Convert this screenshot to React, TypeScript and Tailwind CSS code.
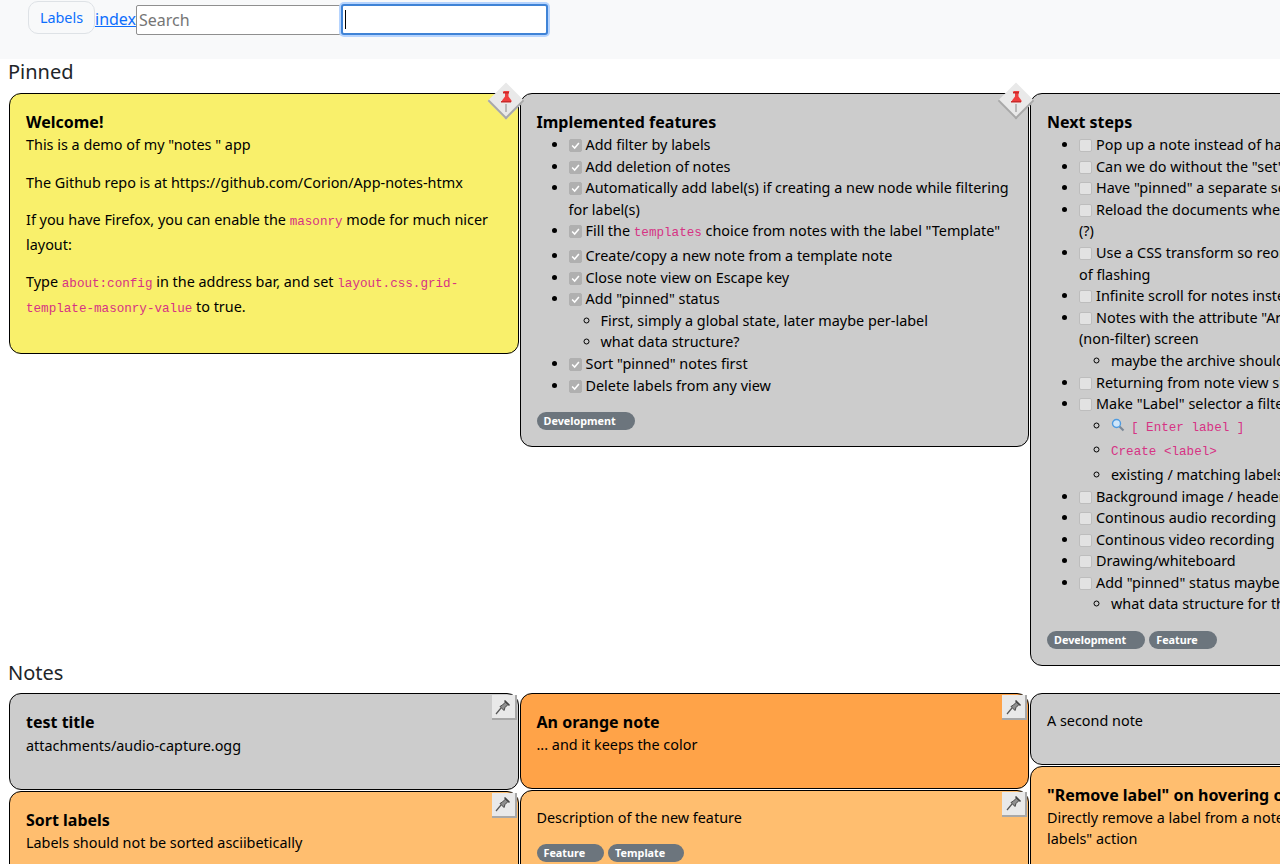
import React from 'react';

const sans = '[font-family:"Noto_Sans",sans-serif]';

function Code({ children }: { children: React.ReactNode }) {
  return <code className='font-["Liberation_Mono",monospace] text-[12.6px] text-[#d63384]'>{children}</code>;
}

function RedPin() {
  return (
    <svg viewBox="0 0 16 24" className="w-[16px] h-[24px]">
      <path d="M8 15v8" stroke="#8a8a8a" strokeWidth="1" />
      <path d="M4.5 2h7l-1 1.5v4l3 4v1.5h-9.500v-1.500l3-4v-4z" fill="#ef3f3f" />
      <path d="M5 3h6v1.500h-6zM3 12h10v1.500h-10z" fill="#c92a2a" />
    </svg>
  );
}

function GrayPin() {
  return (
    <svg viewBox="0 0 16 16" className="w-[16px] h-[16px]">
      <path d="M1 15l5-6" stroke="#555" strokeWidth="1.200" />
      <path d="M5 7.500l4 4 1-3 3-3-2.500-2.500-3 3z" fill="#8f8f8f" stroke="#444" strokeWidth="1" />
      <path d="M9.500 1.500l5 5" stroke="#444" strokeWidth="1.600" />
    </svg>
  );
}

function PinButton({ pinned }: { pinned?: boolean }) {
  if (pinned) {
    return (
      <div className="absolute -top-[6px] -right-[1px] w-[26px] h-[26px] z-10">
        <div className="absolute inset-0 rotate-45 bg-[#e9e9e9] border-r-2 border-b-2 border-[#a8a8a8]" />
        <div className="absolute left-[5px] top-[1px]">
          <RedPin />
        </div>
      </div>
    );
  }
  return (
    <div className="absolute top-[1px] right-[1px] w-[25px] h-[25px] z-10 bg-[#e9e9e9] border-r-2 border-b-2 border-[#a8a8a8] flex items-center justify-center">
      <GrayPin />
    </div>
  );
}

function Note({
  color = 'bg-[#cccccc]',
  pinned,
  pin = true,
  title,
  labels,
  children,
  className = '',
}: {
  color?: string;
  pinned?: boolean;
  pin?: boolean;
  title?: string;
  labels?: string[];
  children?: React.ReactNode;
  className?: string;
}) {
  return (
    <div className={`relative border border-black rounded-[12px] p-4 text-black ${color} ${className}`}>
      {pin && <PinButton pinned={pinned} />}
      {title && <h5 className="text-[16px] leading-[24px] font-bold">{title}</h5>}
      {children}
      {labels && (
        <div className="flex gap-1 h-[18px]">
          {labels.map((l) => (
            <span
              key={l}
              className="h-[18px] rounded-full bg-[#6c757d] text-white text-[10.8px] font-bold leading-[18px] pl-[7px] pr-[19px]"
            >
              {l}
            </span>
          ))}
        </div>
      )}
    </div>
  );
}

function Item({ done, children, sub }: { done?: boolean; children: React.ReactNode; sub?: React.ReactNode[] }) {
  return (
    <li>
      <span
        className={`inline-flex align-[-2px] w-[13px] h-[13px] mr-1 mt-[1px] items-center justify-center rounded-[2px] border ${
          done ? 'bg-[#b0b0b0] border-[#b0b0b0]' : 'bg-[#e2e2e2] border-[#bdbdbd]'
        }`}
      >
        {done && (
          <svg viewBox="0 0 13 13" className="w-[13px] h-[13px]">
            <path d="M2.500 6.500l3 3 5-6" fill="none" stroke="#fff" strokeWidth="1.800" />
          </svg>
        )}
      </span>
      {children}
      {sub && (
        <ul className="list-[circle] pl-8">
          {sub.map((s, i) => (
            <li key={i}>{s}</li>
          ))}
        </ul>
      )}
    </li>
  );
}

function Magnifier() {
  return (
    <svg viewBox="0 0 14 14" className="inline-block w-[14px] h-[14px] mr-[6px] align-[-1px]">
      <path d="M8.500 8.500l4 4" stroke="#7a8796" strokeWidth="2.200" />
      <circle cx="5.500" cy="5.500" r="4" fill="#cfe6fa" stroke="#4f9be0" strokeWidth="1.400" />
    </svg>
  );
}

export default function App() {
  return (
    <div className={`w-[1280px] h-[864px] overflow-hidden bg-white text-[14.4px] leading-[21.6px] text-[#212529] ${sans}`}>
      {/* Navbar */}
      <nav className="h-[59px] bg-[#f8f9fa] pl-[28px] flex items-start">
        <button className="mt-[1px] w-[67px] h-[33px] rounded-[10px] border border-[#dee2e6] text-[#0d6efd] text-[14.4px]">
          Labels
        </button>
        <a className="mt-[7px] text-[#0d6efd] underline text-[16px] leading-[24px]">index</a>
        <input
          placeholder="Search"
          className="mt-[5px] w-[205px] h-[30px] bg-white border border-[#8f8f8f] rounded-[2px] px-[2px] text-[16px] placeholder:text-[#757575] outline-none"
          readOnly
        />
        <div className="mt-[4px] w-[207px] h-[31px] bg-white border-2 border-[#3f83d6] rounded-[3px] shadow-[0_0_0_2px_#b6d4fe] flex items-center pl-[2px]">
          <span className="w-px h-[19px] bg-black" />
        </div>
      </nav>

      <h2 className="ml-2 mt-[1px] text-[20px] leading-[24px]">Pinned</h2>
      <div className="mt-[9px] pl-[9px] flex items-start gap-[1px] h-[566px] w-[2000px]">
        <Note pinned color="bg-[#f9f06b]" title="Welcome!" className="w-[509.500px] shrink-0">
          <p className="mb-4">This is a demo of my "notes " app</p>
          <p className="mb-4">The Github repo is at https://github.com/Corion/App-notes-htmx</p>
          <p className="mb-4">
            If you have Firefox, you can enable the <Code>masonry</Code> mode for much nicer layout:
          </p>
          <p className="mb-4">
            Type <Code>about:config</Code> in the address bar, and set{' '}
            <Code>layout.css.grid-template-masonry-value</Code> to true.
          </p>
        </Note>

        <Note pinned title="Implemented features" labels={['Development']} className="w-[509.500px] shrink-0">
          <ul className="list-disc pl-8 mb-4">
            <Item done>Add filter by labels</Item>
            <Item done>Add deletion of notes</Item>
            <Item done>Automatically add label(s) if creating a new node while filtering for label(s)</Item>
            <Item done>
              Fill the <Code>templates</Code> choice from notes with the label "Template"
            </Item>
            <Item done>Create/copy a new note from a template note</Item>
            <Item done>Close note view on Escape key</Item>
            <Item done sub={['First, simply a global state, later maybe per-label', 'what data structure?']}>
              Add "pinned" status
            </Item>
            <Item done>Sort "pinned" notes first</Item>
            <Item done>Delete labels from any view</Item>
          </ul>
        </Note>

        <Note pin={false} title="Next steps" labels={['Development', 'Feature']} className="w-[509.500px] shrink-0">
          <ul className="list-disc pl-8 mb-4">
            <Item>Pop up a note instead of having a separate page for it</Item>
            <Item>Can we do without the "set" page altogether</Item>
            <Item>Have "pinned" a separate section of the page</Item>
            <Item>
              Reload the documents when the window gets the focus again <br />
              (?)
            </Item>
            <Item>
              Use a CSS transform so reordering notes is animated instead <br />
              of flashing
            </Item>
            <Item>Infinite scroll for notes instead of paging</Item>
            <Item sub={['maybe the archive should be a separate view']}>
              Notes with the attribute "Archived" do not show on the main <br />
              (non-filter) screen
            </Item>
            <Item>Returning from note view should restore position</Item>
            <Item
              sub={[
                <span key="a">
                  <Magnifier />
                  <Code>[ Enter label ]</Code>
                </span>,
                <Code key="b">Create &lt;label&gt;</Code>,
                'existing / matching labels',
              ]}
            >
              Make "Label" selector a filter box
            </Item>
            <Item>Background image / header image</Item>
            <Item>Continous audio recording</Item>
            <Item>Continous video recording</Item>
            <Item>Drawing/whiteboard</Item>
            <Item sub={['what data structure for this?']}>Add "pinned" status maybe per label</Item>
          </ul>
        </Note>
      </div>

      <h2 className="ml-2 mt-[2px] text-[20px] leading-[24px]">Notes</h2>
      <div className="mt-[8px] pl-[9px] flex items-start gap-[1px] w-[2000px]">
        <div className="w-[509.500px] shrink-0 flex flex-col gap-[1px]">
          <Note title="test title">
            <p className="mb-4 mt-[1px]">attachments/audio-capture.ogg</p>
          </Note>
          <Note color="bg-[#ffbe6f]" title="Sort labels">
            <p className="mb-4">Labels should not be sorted asciibetically</p>
          </Note>
        </div>
        <div className="w-[509.500px] shrink-0 flex flex-col gap-[1px]">
          <Note color="bg-[#ffa348]" title="An orange note">
            <p className="mb-4">... and it keeps the color</p>
          </Note>
          <Note color="bg-[#ffbe6f]" labels={['Feature', 'Template']}>
            <p className="mb-4">Description of the new feature</p>
          </Note>
        </div>
        <div className="w-[509.500px] shrink-0 flex flex-col gap-[1px]">
          <Note pin={false}>
            <p className="mb-4">A second note</p>
          </Note>
          <Note pin={false} color="bg-[#ffbe6f]" title={'"Remove label" on hovering over a label'}>
            <p className="mb-4">
              Directly remove a label from a note instead of the "edit <br />
              labels" action
            </p>
          </Note>
        </div>
      </div>
    </div>
  );
}
